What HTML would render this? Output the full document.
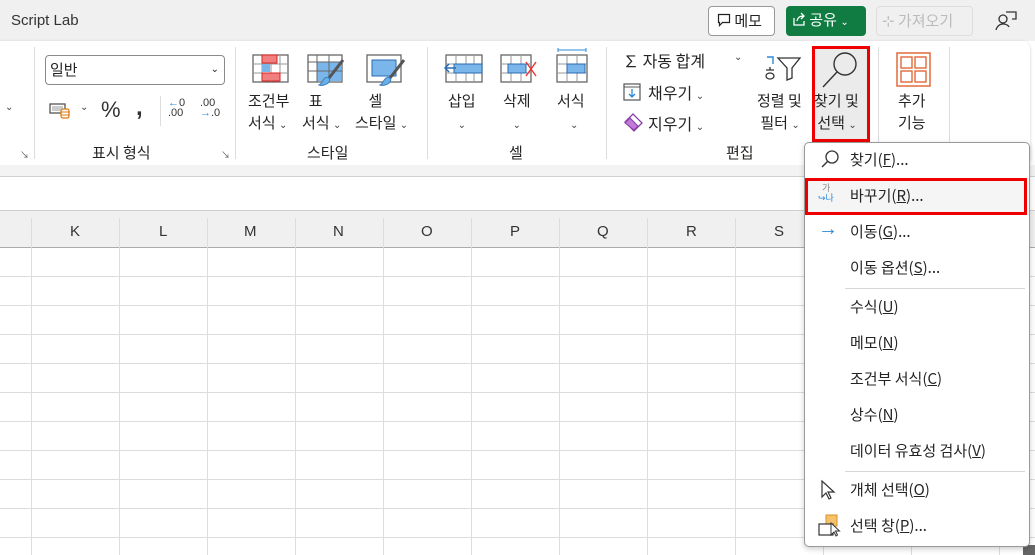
<!DOCTYPE html>
<html><head><meta charset="utf-8"><style>
*{margin:0;padding:0;box-sizing:border-box}
body{width:1035px;height:555px;overflow:hidden;background:#fff;font-family:"Liberation Sans","Noto Sans CJK KR",sans-serif;color:#252423;position:relative;font-size:14px}
.a{position:absolute;white-space:nowrap}
.k{font-family:"Noto Sans CJK KR","Liberation Sans",sans-serif}
.chev{font-size:10px;color:#444}
.vl{position:absolute;width:1px;background:#ddd}
.hl{position:absolute;height:1px;background:#dcdcdc}
.mi{position:absolute;left:850px;font-size:15px;font-family:"Noto Sans CJK KR","Liberation Sans",sans-serif;color:#252423}
u{text-decoration:underline}
</style></head><body>
<div class="a" style="left:0;top:0;width:1035px;height:41px;background:#f0f0f0"></div>
<div class="a" style="left:11px;top:12px;font-size:15px;color:#333">Script Lab</div>
<div class="a k" style="left:708px;top:6px;width:67px;height:30px;border:1px solid #999;border-radius:4px;background:#fff;font-size:15px;padding:3px 0 0 8px">
<svg width="14" height="14" style="vertical-align:-1px" viewBox="0 0 14 14"><path d="M1.5 1.5h11v8h-7l-3 3v-3h-1z" fill="none" stroke="#222" stroke-width="1.2"/></svg> 메모</div>
<div class="a k" style="left:786px;top:6px;width:80px;height:30px;border-radius:4px;background:#107c41;color:#fff;font-size:15px;padding:3px 0 0 6px">
<svg width="14" height="14" style="vertical-align:-1px" viewBox="0 0 14 14"><path d="M2 6v7h10v-4M5 9c1-4 3-5 7-5M9 1l3 3-3 3" fill="none" stroke="#fff" stroke-width="1.3"/></svg> 공유 <span style="font-size:10px">⌄</span></div>
<div class="a k" style="left:876px;top:6px;width:97px;height:30px;border:1px solid #ddd;border-radius:4px;color:#bbb;font-size:15px;padding:3px 0 0 5px">⊹ 가져오기</div>
<svg class="a" style="left:994px;top:10px" width="24" height="22" viewBox="0 0 24 22"><circle cx="9" cy="9" r="4" fill="none" stroke="#333" stroke-width="1.3"/><path d="M2 20c1-4 4-6 7-6s5 1 6 3M12 2h10v7h-4" fill="none" stroke="#333" stroke-width="1.3"/></svg>

<div class="a" style="left:-10px;top:41px;width:1040px;height:124px;background:#fff;border-radius:8px;box-shadow:0 1px 3px rgba(0,0,0,.2)"></div>
<div class="vl" style="left:34px;top:47px;height:112px"></div>
<div class="vl" style="left:235px;top:47px;height:112px"></div>
<div class="vl" style="left:427px;top:47px;height:112px"></div>
<div class="vl" style="left:606px;top:47px;height:112px"></div>
<div class="vl" style="left:878px;top:47px;height:112px"></div>
<div class="vl" style="left:949px;top:47px;height:112px"></div>
<div class="a chev" style="left:5px;top:102px">⌄</div>
<div class="a" style="left:20px;top:148px;font-size:9px;color:#555">↘</div>
<div class="a k" style="left:45px;top:55px;width:180px;height:30px;border:1px solid #8a8a8a;border-radius:4px;padding:3px 0 0 4px;font-size:15px">일반<span style="position:absolute;right:5px;top:4px;font-size:10px">⌄</span></div>
<svg class="a" style="left:49px;top:101px" width="24" height="18" viewBox="0 0 24 18"><rect x="1" y="3" width="15" height="9" fill="none" stroke="#555" stroke-width="1.3"/><rect x="3" y="5" width="11" height="5" fill="#ccc"/><rect x="12" y="8" width="8" height="9" rx="2" fill="#fff" stroke="#e07a10" stroke-width="1.3"/><path d="M12 11h8M12 14h8" stroke="#e07a10"/></svg>
<div class="a chev" style="left:80px;top:102px">⌄</div>
<div class="a" style="left:101px;top:97px;font-size:22px;color:#333">%</div>
<div class="a" style="left:136px;top:94px;font-size:24px;font-weight:bold;color:#333">,</div>
<div class="vl" style="left:160px;top:96px;height:30px"></div>
<div class="a" style="left:168px;top:98px;font-size:11px;line-height:10px;color:#333"><span style="color:#2b88d8">←</span>0<br>.00</div>
<div class="a" style="left:200px;top:98px;font-size:11px;line-height:10px;color:#333">.00<br><span style="color:#2b88d8">→</span>.0</div>
<div class="a k" style="left:92px;top:142px;font-size:15px">표시 형식</div>
<div class="a" style="left:221px;top:148px;font-size:9px;color:#555">↘</div>
<svg class="a" style="left:252px;top:54px" width="38" height="30" viewBox="0 0 38 30"><rect x="1" y="1" width="35" height="27" fill="#fff" stroke="#666" stroke-width="1.3"/><path d="M1 10h35M1 19h35M10 1v27M19 1v27M28 1v27" stroke="#999"/><rect x="10" y="1" width="15" height="8" fill="#f08080" stroke="#d22"/><rect x="10" y="19" width="18" height="8" fill="#f08080" stroke="#d22"/><rect x="10" y="10" width="8" height="8" fill="#7ab6ea"/></svg>
<svg class="a" style="left:307px;top:54px" width="38" height="34" viewBox="0 0 38 34"><rect x="1" y="1" width="34" height="27" fill="#fff" stroke="#666" stroke-width="1.3"/><rect x="10" y="8" width="24" height="19" fill="#7ab6ea"/><path d="M1 8h34M1 17h34M10 1v27M22 1v27" stroke="#666"/><path d="M36 6L22 24" stroke="#555" stroke-width="3"/><path d="M18 24c3-2 6 1 4 4-2 3-8 4-10 3 3-1 3-5 6-7z" fill="#6ab0e8" stroke="#3a7cc0"/></svg>
<svg class="a" style="left:366px;top:54px" width="40" height="34" viewBox="0 0 40 34"><rect x="1" y="1" width="34" height="27" fill="#fff" stroke="#666" stroke-width="1.3"/><rect x="6" y="6" width="24" height="16" fill="#7ab6ea" stroke="#2a6ab0"/><path d="M38 6L24 24" stroke="#555" stroke-width="3"/><path d="M20 24c3-2 6 1 4 4-2 3-8 4-10 3 3-1 3-5 6-7z" fill="#6ab0e8" stroke="#3a7cc0"/></svg>
<div class="a k" style="left:248px;top:90px;line-height:22px;font-size:15px">조건부<br>서식 <span class="chev">⌄</span></div>
<div class="a k" style="left:302px;top:90px;line-height:22px;font-size:15px">&nbsp;&nbsp;표<br>서식 <span class="chev">⌄</span></div>
<div class="a k" style="left:355px;top:90px;line-height:22px;font-size:15px">&nbsp;&nbsp;&nbsp;&nbsp;셀<br>스타일 <span class="chev">⌄</span></div>
<div class="a k" style="left:307px;top:142px;font-size:15px">스타일</div>
<svg class="a" style="left:444px;top:54px" width="40" height="30" viewBox="0 0 40 30"><rect x="2" y="1" width="36" height="27" fill="#fff" stroke="#666" stroke-width="1.3"/><path d="M2 10h36M2 19h36M12 1v27M22 1v27M30 1v27" stroke="#999"/><rect x="10" y="10" width="28" height="9" fill="#7ab6ea" stroke="#2a6ab0"/><path d="M12 14H1M5 10l-4 4 4 4" stroke="#2a6ab0" fill="none" stroke-width="1.5"/></svg>
<svg class="a" style="left:500px;top:54px" width="38" height="30" viewBox="0 0 38 30"><rect x="1" y="1" width="30" height="27" fill="#fff" stroke="#666" stroke-width="1.3"/><path d="M1 10h30M1 19h30M11 1v27M21 1v27" stroke="#999"/><rect x="8" y="10" width="18" height="9" fill="#7ab6ea" stroke="#2a6ab0"/><path d="M26 8l10 14M36 8L26 22" stroke="#e33" stroke-width="1.4"/></svg>
<svg class="a" style="left:555px;top:48px" width="34" height="36" viewBox="0 0 34 36"><path d="M3 2h28M3 0v4M31 0v4" stroke="#2b88d8"/><rect x="2" y="7" width="30" height="27" fill="#fff" stroke="#666" stroke-width="1.3"/><path d="M2 16h30M2 25h30M12 7v27M22 7v27" stroke="#999"/><rect x="12" y="16" width="18" height="9" fill="#7ab6ea" stroke="#2a6ab0"/></svg>
<div class="a k" style="left:448px;top:90px;line-height:22px;font-size:15px;text-align:center">삽입<br><span class="chev">⌄</span></div>
<div class="a k" style="left:503px;top:90px;line-height:22px;font-size:15px;text-align:center">삭제<br><span class="chev">⌄</span></div>
<div class="a k" style="left:557px;top:90px;line-height:22px;font-size:15px;text-align:center">서식<br>&nbsp;&nbsp;<span class="chev">⌄</span></div>
<div class="a k" style="left:509px;top:142px;font-size:15px">셀</div>
<div class="a k" style="left:623px;top:48px;font-size:16px">∑ 자동 합계</div>
<div class="a chev" style="left:734px;top:52px">⌄</div>
<svg class="a" style="left:623px;top:83px" width="18" height="18" viewBox="0 0 18 18"><rect x="1" y="1" width="16" height="16" fill="#fff" stroke="#555" stroke-width="1.2"/><path d="M1 4h16" stroke="#555"/><path d="M9 6v8M6 11l3 3 3-3" stroke="#2b88d8" fill="none" stroke-width="1.3"/></svg>
<div class="a k" style="left:648px;top:80px;font-size:16px">채우기 <span class="chev">⌄</span></div>
<svg class="a" style="left:622px;top:113px" width="22" height="20" viewBox="0 0 22 20"><path d="M11 1l9 9-8 8-9-9z" fill="#fff" stroke="#8a3fa8" stroke-width="1.3"/><path d="M3 10l5-5 8 8-4 4z" fill="#c07ad8" stroke="#8a3fa8"/></svg>
<div class="a k" style="left:648px;top:111px;font-size:16px">지우기 <span class="chev">⌄</span></div>
<svg class="a" style="left:764px;top:54px" width="40" height="30" viewBox="0 0 40 30"><path d="M3 3h6v7" stroke="#2b88d8" fill="none" stroke-width="1.4"/><path d="M2 16h8M6 13v3" stroke="#333" stroke-width="1.3"/><ellipse cx="6" cy="22" rx="4" ry="3" fill="none" stroke="#333" stroke-width="1.3"/><path d="M14 4h22l-8 10v10l-5 2V14z" fill="#fff" stroke="#333" stroke-width="1.3"/></svg>
<div class="a k" style="left:757px;top:90px;line-height:22px;font-size:15px">정렬 및<br>&nbsp;필터 <span class="chev">⌄</span></div>
<div class="a" style="left:812px;top:46px;width:58px;height:96px;border:3px solid #e00;background:#ebebeb"></div>
<svg class="a" style="left:819px;top:50px" width="42" height="40" viewBox="0 0 42 40"><circle cx="26" cy="14" r="11" fill="none" stroke="#333" stroke-width="1.4"/><path d="M18 22L4 37" stroke="#333" stroke-width="1.4"/></svg>
<div class="a k" style="left:814px;top:90px;line-height:22px;font-size:15px">찾기 및<br>&nbsp;선택 <span class="chev">⌄</span></div>
<div class="a k" style="left:726px;top:142px;font-size:15px">편집</div>
<svg class="a" style="left:896px;top:52px" width="36" height="36" viewBox="0 0 36 36"><rect x="1" y="1" width="33" height="33" fill="none" stroke="#e06a3a" stroke-width="1.5"/><rect x="5" y="5" width="11" height="11" fill="none" stroke="#e06a3a" stroke-width="1.4"/><rect x="19" y="5" width="11" height="11" fill="none" stroke="#e06a3a" stroke-width="1.4"/><rect x="5" y="19" width="11" height="11" fill="none" stroke="#e06a3a" stroke-width="1.4"/><rect x="19" y="19" width="11" height="11" fill="none" stroke="#e06a3a" stroke-width="1.4"/></svg>
<div class="a k" style="left:898px;top:90px;line-height:22px;font-size:15px">추가<br>기능</div>

<div class="a" style="left:0;top:165px;width:1035px;height:11px;background:#f3f3f3"></div>
<div class="hl" style="left:0;top:176px;width:1035px;background:#d0d0d0"></div>
<div class="hl" style="left:0;top:210px;width:1035px;background:#d0d0d0"></div>
<div class="a" style="left:0;top:211px;width:1035px;height:36px;background:#f0f0f0"></div>
<div class="hl" style="left:0;top:247px;width:1035px;background:#ababab"></div>
<div class="vl" style="left:31px;top:218px;height:337px"></div>
<div class="vl" style="left:119px;top:218px;height:337px"></div>
<div class="vl" style="left:207px;top:218px;height:337px"></div>
<div class="vl" style="left:295px;top:218px;height:337px"></div>
<div class="vl" style="left:383px;top:218px;height:337px"></div>
<div class="vl" style="left:471px;top:218px;height:337px"></div>
<div class="vl" style="left:559px;top:218px;height:337px"></div>
<div class="vl" style="left:647px;top:218px;height:337px"></div>
<div class="vl" style="left:735px;top:218px;height:337px"></div>
<div class="vl" style="left:823px;top:218px;height:337px"></div>
<div class="vl" style="left:911px;top:218px;height:337px"></div>
<div class="vl" style="left:999px;top:218px;height:337px"></div>
<div class="hl" style="left:0;top:276px;width:1035px"></div>
<div class="hl" style="left:0;top:305px;width:1035px"></div>
<div class="hl" style="left:0;top:334px;width:1035px"></div>
<div class="hl" style="left:0;top:363px;width:1035px"></div>
<div class="hl" style="left:0;top:392px;width:1035px"></div>
<div class="hl" style="left:0;top:421px;width:1035px"></div>
<div class="hl" style="left:0;top:450px;width:1035px"></div>
<div class="hl" style="left:0;top:479px;width:1035px"></div>
<div class="hl" style="left:0;top:508px;width:1035px"></div>
<div class="hl" style="left:0;top:537px;width:1035px"></div>
<div class="a" style="left:70px;top:223px;font-size:15px;color:#333">K</div>
<div class="a" style="left:159px;top:223px;font-size:15px;color:#333">L</div>
<div class="a" style="left:244px;top:223px;font-size:15px;color:#333">M</div>
<div class="a" style="left:333px;top:223px;font-size:15px;color:#333">N</div>
<div class="a" style="left:421px;top:223px;font-size:15px;color:#333">O</div>
<div class="a" style="left:510px;top:223px;font-size:15px;color:#333">P</div>
<div class="a" style="left:597px;top:223px;font-size:15px;color:#333">Q</div>
<div class="a" style="left:686px;top:223px;font-size:15px;color:#333">R</div>
<div class="a" style="left:774px;top:223px;font-size:15px;color:#333">S</div>
<div class="a" style="left:1023px;top:545px;width:12px;height:10px;background:#666"></div>

<div class="a" style="left:804px;top:142px;width:226px;height:405px;background:#fff;border:1px solid #999;border-radius:5px;box-shadow:0 2px 6px rgba(0,0,0,.2)"></div>
<svg class="a" style="left:820px;top:149px" width="20" height="20" viewBox="0 0 20 20"><circle cx="12" cy="8" r="6" fill="none" stroke="#333" stroke-width="1.3"/><path d="M8 12l-6 6" stroke="#333" stroke-width="1.4"/></svg>
<div class="mi" style="top:149px">찾기(<u>F</u>)...</div>
<div class="a" style="left:805px;top:178px;width:222px;height:37px;border:3px solid #e00;background:#f5f5f5"></div>
<div class="a k" style="left:818px;top:183px;font-size:9px;line-height:10px;color:#2b88d8">&nbsp;&nbsp;<span style="color:#888">가</span><br>↪나</div>
<div class="mi" style="top:185px">바꾸기(<u>R</u>)...</div>
<div class="a" style="left:818px;top:218px;font-size:20px;color:#2b88d8">→</div>
<div class="mi" style="top:221px">이동(<u>G</u>)...</div>
<div class="mi" style="top:257px">이동 옵션(<u>S</u>)...</div>
<div class="hl" style="left:845px;top:288px;width:180px;background:#d6d6d6"></div>
<div class="mi" style="top:296px">수식(<u>U</u>)</div>
<div class="mi" style="top:332px">메모(<u>N</u>)</div>
<div class="mi" style="top:368px">조건부 서식(<u>C</u>)</div>
<div class="mi" style="top:404px">상수(<u>N</u>)</div>
<div class="mi" style="top:440px">데이터 유효성 검사(<u>V</u>)</div>
<div class="hl" style="left:845px;top:471px;width:180px;background:#d6d6d6"></div>
<svg class="a" style="left:820px;top:479px" width="16" height="22" viewBox="0 0 16 22"><path d="M2 2v16l4-4 3 6 2-1-3-6h6z" fill="#fff" stroke="#333" stroke-width="1.2"/></svg>
<div class="mi" style="top:479px">개체 선택(<u>O</u>)</div>
<svg class="a" style="left:818px;top:514px" width="24" height="24" viewBox="0 0 24 24"><rect x="8" y="1" width="11" height="11" fill="#f5c26a" stroke="#d8902a"/><rect x="1" y="10" width="14" height="11" fill="#fff" stroke="#333" stroke-width="1.2"/><path d="M13 9v12l3-3 2 4 1.5-1-2-4h4z" fill="#fff" stroke="#333"/></svg>
<div class="mi" style="top:515px">선택 창(<u>P</u>)...</div>
</body></html>
